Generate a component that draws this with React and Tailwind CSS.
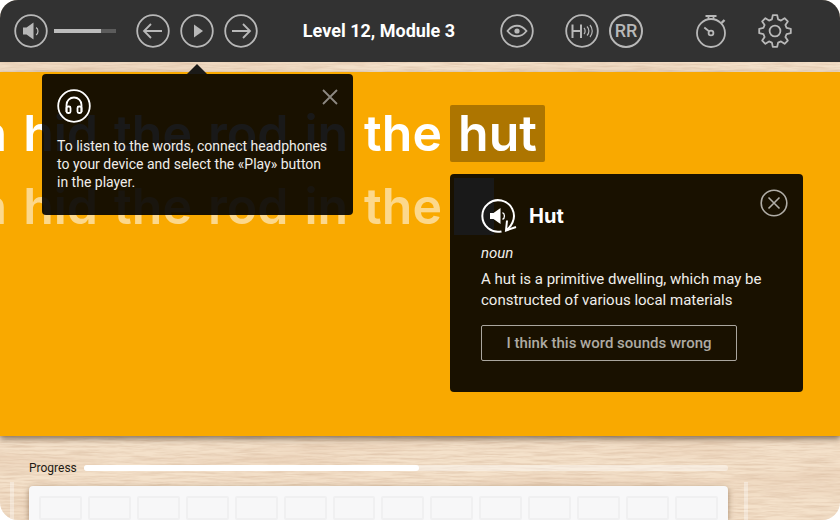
import { useState } from 'react'

const words = ['n', 'hid', 'the', 'rod', 'in', 'the']
const cells = Array.from({ length: 14 }, (_, i) => i)

function Icon({ children, className = 'size-[34px]' }) {
  return (
    <svg
      viewBox="0 0 34 34"
      className={className}
      fill="none"
      stroke="currentColor"
      strokeWidth="1.8"
      aria-hidden="true"
    >
      {children}
    </svg>
  )
}

function IconButton({ label, children }) {
  return (
    <button type="button" aria-label={label} className="flex-none cursor-pointer text-[#b8b8b8]">
      <Icon>{children}</Icon>
    </button>
  )
}

const ring = <circle cx="17" cy="17" r="15.8" />

function WoodGrain() {
  return (
    <svg className="absolute inset-0 h-full w-full" aria-hidden="true">
      <filter id="grain" x="0" y="0" width="100%" height="100%">
        <feTurbulence type="fractalNoise" baseFrequency="0.03 0.5" numOctaves="4" seed="7" />
        <feColorMatrix values="0 0 0 0 0.72  0 0 0 0 0.53  0 0 0 0 0.38  1.5 0 0 0 -0.58" />
      </filter>
      <filter id="bands" x="0" y="0" width="100%" height="100%">
        <feTurbulence type="fractalNoise" baseFrequency="0.004 0.04" numOctaves="3" seed="3" />
        <feColorMatrix values="0 0 0 0 0.8  0 0 0 0 0.6  0 0 0 0 0.44  0 1.6 0 0 -0.7" />
      </filter>
      <rect width="100%" height="100%" fill="#f4e1ca" />
      <rect width="100%" height="100%" filter="url(#bands)" />
      <rect width="100%" height="100%" filter="url(#grain)" />
      <rect x="10" y="482" width="4" height="38" fill="#fff" opacity="0.35" />
      <rect x="744" y="482" width="4" height="38" fill="#fff" opacity="0.35" />
    </svg>
  )
}

function Toolbar() {
  const [volume, setVolume] = useState(75)

  return (
    <header className="relative flex h-[62px] flex-none items-center bg-[#323232] pr-12 pl-3.5">
      <IconButton label="Mute">
        {ring}
        <path d="M9 13.5h3.5l7-5v17l-7-5H9z" fill="currentColor" stroke="none" />
        <path d="M22 13.6c2.6 1 2.6 6.2 0 7.2" strokeWidth="1.3" />
      </IconButton>
      <input
        type="range"
        aria-label="Volume"
        value={volume}
        onChange={(e) => setVolume(e.target.value)}
        className="ml-1.5 h-1 w-[62px] cursor-pointer appearance-none bg-linear-to-r from-[#bcbcbc] from-75% to-[#5c5c5c] to-75% [&::-webkit-slider-thumb]:appearance-none"
      />

      {/* Player controls */}
      <div className="ml-5 flex gap-2.5">
        <IconButton label="Previous">
          {ring}
          <path d="M26 17H9M15 10l-7 7 7 7" />
        </IconButton>
        <IconButton label="Play">
          {ring}
          <path d="M14 10.5v13l9-6.5z" fill="currentColor" stroke="none" />
        </IconButton>
        <IconButton label="Next">
          {ring}
          <path d="M8 17h17M19 10l7 7-7 7" />
        </IconButton>
      </div>

      <h1 className="flex-1 text-center text-lg font-bold whitespace-nowrap text-white">
        Level 12, Module 3
      </h1>

      <div className="flex items-center">
        <IconButton label="View">
          {ring}
          <path d="M7.5 17c5.5-7 13.5-7 19 0-5.5 7-13.5 7-19 0z" />
          <circle cx="17" cy="17" r="2.6" fill="currentColor" stroke="none" />
        </IconButton>
        <div className="ml-[31px] flex gap-2.5">
          <IconButton label="Highlight sound">
            {ring}
            <path d="M7.5 10.5v13.5M16 10.5v13.5M7.5 17H16" strokeWidth="2" />
            <path
              d="M19 14c1.5 1.5 1.5 4.5 0 6M22 12.5c2.5 2.5 2.5 6.5 0 9M25 11c3 3.5 3 8.5 0 12"
              strokeWidth="1.2"
            />
          </IconButton>
          <button
            type="button"
            className="flex size-[34px] cursor-pointer items-center justify-center rounded-full border-2 border-[#b8b8b8] text-lg font-medium text-[#b8b8b8]"
          >
            RR
          </button>
        </div>
        <div className="ml-[51px] flex gap-[30px]">
          <IconButton label="Timer">
            <circle cx="17" cy="19" r="14" />
            <path d="M11.5 2h11M14.5 2v3.500M19.5 2v3.500M15.3 17.500l-5-4" />
            <path d="M27.500 9l3-3" strokeWidth="2.400" />
            <circle cx="17" cy="19" r="2.4" />
          </IconButton>
          <IconButton label="Settings">
            <path
              strokeLinejoin="round"
              d="M13.9 5.4 14.8 1.2H19.2L20.1 5.4 23 6.6 26.6 4.2 29.8 7.4 27.4 11 28.6 13.9 32.8 14.8V19.2L28.6 20.1 27.4 23 29.8 26.6 26.6 29.8 23 27.4 20.1 28.6 19.2 32.8H14.8L13.9 28.6 11 27.4 7.4 29.8 4.2 26.6 6.6 23 5.4 20.1 1.2 19.2V14.8L5.4 13.9 6.6 11 4.2 7.4 7.4 4.2 11 6.6z"
            />
            <circle cx="17" cy="17" r="5.4" />
          </IconButton>
        </div>
      </div>
    </header>
  )
}

function Sentence() {
  return (
    <div className="flex w-[545px] flex-col gap-4 overflow-hidden pt-[33px] font-['Inter',sans-serif] text-[50px] font-semibold text-white">
      <p className="flex h-[57px] items-center justify-end gap-4 whitespace-nowrap">
        {words.map((word, i) => (
          <span key={i}>{word}</span>
        ))}
        <mark className="-ml-2 flex h-[57px] w-[95px] flex-none items-center justify-center rounded-xs bg-[#ad7500] text-white">
          hut
        </mark>
      </p>
      <p className="flex h-[57px] items-center justify-end gap-4 whitespace-nowrap">
        {words.map((word, i) => (
          <span key={i} className="opacity-55">
            {word}
          </span>
        ))}
        <span className="-ml-2 h-[57px] w-[95px] flex-none">
          <span className="ml-1 block h-full w-10 bg-white" />
        </span>
      </p>
    </div>
  )
}

function HeadphonesTip({ onClose }) {
  return (
    <aside className="absolute top-0.5 left-[42px] w-[311px] rounded bg-black/90 px-[15px] pt-[15px] pb-6 text-[#f0eeea]">
      <svg viewBox="0 0 20 10" className="absolute bottom-full left-[145px] h-2.5 w-5" aria-hidden="true">
        <path d="M0 10 10 0l10 10z" fill="#1b1a18" />
      </svg>
      <div className="flex items-start justify-between">
        <Icon className="size-[34px] text-white">
          {ring}
          <path d="M9.5 23v-7a7.5 7.5 0 0 1 15 0v7" />
          <rect x="9.5" y="17.5" width="4" height="6.5" rx="1.5" />
          <rect x="20.5" y="17.5" width="4" height="6.5" rx="1.5" />
        </Icon>
        <button type="button" aria-label="Close tip" onClick={onClose} className="cursor-pointer text-[#8d8981]">
          <svg viewBox="0 0 16 16" className="size-4" fill="none" stroke="currentColor" strokeWidth="1.8">
            <path d="M1 1l14 14M15 1 1 15" />
          </svg>
        </button>
      </div>
      <p className="mt-3.5 text-sm leading-[18px] whitespace-nowrap">
        To listen to the words, connect headphones
        <br />
        to your device and select the «Play» button
        <br />
        in the player.
      </p>
    </aside>
  )
}

function WordCard({ onClose }) {
  return (
    <article className="absolute top-[102px] left-[450px] w-[353px] rounded bg-black/90 px-[31px] pt-[25px] pb-[31px] text-[#f0eeea]">
      <div className="flex items-center">
        <button type="button" aria-label="Listen to the word" className="cursor-pointer text-white">
          <Icon className="size-[34px] overflow-visible">
            <path d="M20.5 32.4A15.8 15.8 0 1 1 31.5 23.5Q29.5 28 25.5 31" strokeWidth="2" />
            <path d="M9 14h3.5l7-5v16l-7-5H9z" fill="currentColor" stroke="none" />
            <path d="M21.5 13.6c2.6 1 2.6 5.8 0 6.8" strokeWidth="1.3" />
            <path d="M26 21.5 25 31.5 35 28" strokeWidth="2" />
          </Icon>
        </button>
        <h2 className="ml-3.5 font-['Inter',sans-serif] text-xl font-bold text-white">Hut</h2>
      </div>
      <button
        type="button"
        aria-label="Close"
        onClick={onClose}
        className="absolute top-[15px] right-[15px] cursor-pointer text-[#b0ada6]"
      >
        <svg viewBox="0 0 28 28" className="size-7" fill="none" stroke="currentColor" strokeWidth="1.6">
          <circle cx="14" cy="14" r="12.8" />
          <path d="M8.5 8.5l11 11M19.5 8.5l-11 11" />
        </svg>
      </button>
      <p className="mt-2.5 text-[15px] leading-5 italic">noun</p>
      <p className="mt-1.5 text-[15px] leading-[21px] whitespace-nowrap">
        A hut is a primitive dwelling, which may be
        <br />
        constructed of various local materials
      </p>
      <button
        type="button"
        className="mt-3.5 h-9 w-64 cursor-pointer rounded-xs border border-[#aaa69e] text-[15px] font-medium text-[#aeaba3]"
      >
        I think this word sounds wrong
      </button>
    </article>
  )
}

export default function App() {
  const [showTip, setShowTip] = useState(true)
  const [showCard, setShowCard] = useState(true)

  return (
    <div className="bg-white font-['Roboto',sans-serif]">
      <div className="relative flex min-h-screen flex-col overflow-hidden rounded-[18px]">
        <WoodGrain />
        <Toolbar />

        <main className="relative mt-2.5 flex-1 bg-[#f9a900] shadow-[0_3px_6px_rgba(70,50,30,0.6)]">
          <Sentence />
          {showTip && <HeadphonesTip onClose={() => setShowTip(false)} />}
          {showCard && <WordCard onClose={() => setShowCard(false)} />}
        </main>

        {/* Progress and letter tray */}
        <footer className="relative pt-6 pr-28 pl-[29px]">
          <div className="flex items-center gap-[7px]">
            <span className="text-xs leading-4 text-[#1f1a14]">Progress</span>
            <div
              role="progressbar"
              aria-label="Progress"
              aria-valuenow={52}
              className="h-1.5 flex-1 rounded-full bg-white/40"
            >
              <div className="h-full w-[52%] rounded-full bg-white" />
            </div>
          </div>
          <div className="mt-2.5 flex gap-1.5 rounded-t bg-[#f8f8f9] px-2.5 pt-2.5 shadow-[0_2px_6px_rgba(110,75,45,0.6)]">
            {cells.map((cell) => (
              <div key={cell} className="h-6 flex-1 rounded-xs border-2 border-[#f0f0f1] bg-[#f7f7f8]" />
            ))}
          </div>
        </footer>
      </div>
    </div>
  )
}
